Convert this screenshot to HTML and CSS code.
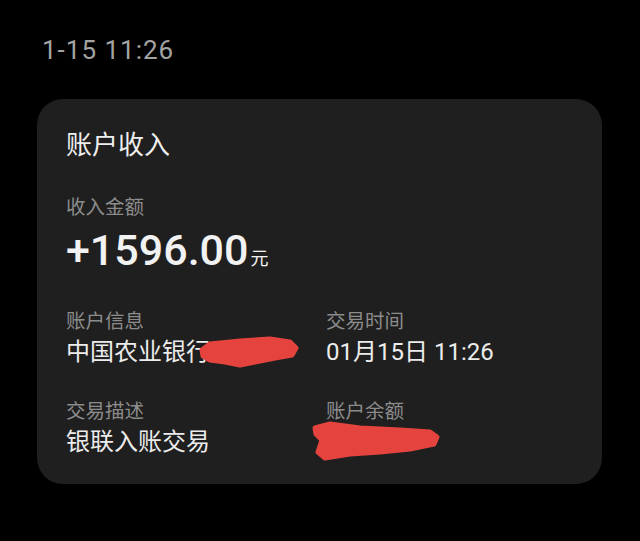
FILE: index.html
```html
<!DOCTYPE html>
<html lang="zh-CN">
<head>
<meta charset="utf-8">
<title>账户收入</title>
<link rel="stylesheet" href="styles.css">
</head>
<body>
<div class="time">1-15 11:26</div>
<div class="card">
  <div class="title">账户收入</div>
  <div class="label">收入金额</div>
  <div class="amount">+1596.00<span class="unit">元</span></div>
  <div class="grid">
    <div class="cell">
      <div class="label">账户信息</div>
      <div class="value">中国农业银行*5</div>
    </div>
    <div class="cell">
      <div class="label">交易时间</div>
      <div class="value">01月15日 11:26</div>
    </div>
    <div class="cell">
      <div class="label">交易描述</div>
      <div class="value">银联入账交易</div>
    </div>
    <div class="cell">
      <div class="label">账户余额</div>
      <div class="value">1</div>
    </div>
  </div>
  <svg class="scribble s1" width="105" height="35" viewBox="0 0 105 35"><polygon points="5,15 13,9 43,6 73,4 93,7 99,13 95,20 78,23 58,27 43,30 28,27 13,25 6,21"/></svg>
  <svg class="scribble s2" width="135" height="42" viewBox="0 0 135 42"><polygon points="5,8 20,4 50,8 90,10 120,12 127,17 124,24 100,29 70,32 40,34 15,38 8,32 12,20 6,14"/></svg>
</div>
</body>
</html>
```
FILE: styles.css
```css
html, body {
  margin: 0;
  padding: 0;
  background: #000;
}
body {
  font-family: "Roboto", "Noto Sans CJK SC", sans-serif;
  width: 640px;
  height: 541px;
  overflow: hidden;
}
.time {
  padding: 38px 0 0 42px;
  font-size: 26px;
  line-height: 25px;
  letter-spacing: 1px;
  color: #a3a3a3;
}
.card {
  position: relative;
  margin: 36px 0 0 37px;
  width: 565px;
  height: 385px;
  box-sizing: border-box;
  padding: 34px 0 0 29px;
  background: #1f1f1f;
  border-radius: 26px;
}
.title {
  font-size: 26px;
  line-height: 25px;
  color: #efefef;
}
.label {
  font-size: 19.5px;
  line-height: 19px;
  color: #8c8c8c;
}
.title + .label {
  margin-top: 40px;
}
.amount {
  margin-top: 12px;
  font-size: 43px;
  line-height: 43px;
  color: #f2f2f2;
  font-weight: 500;
}
.unit {
  font-size: 18px;
  line-height: 18px;
  font-weight: 400;
  margin-left: 2px;
}
.grid {
  margin-top: 40px;
  display: grid;
  grid-template-columns: 260px 1fr;
  row-gap: 38px;
}
.value {
  margin-top: 9px;
  font-size: 24px;
  line-height: 24px;
  color: #ececec;
}
.scribble {
  position: absolute;
}
.scribble polygon {
  fill: #e5443e;
  stroke: #e5443e;
  stroke-width: 5;
  stroke-linejoin: round;
}
.s1 {
  left: 160px;
  top: 236px;
}
.s2 {
  left: 273px;
  top: 321px;
}
```
